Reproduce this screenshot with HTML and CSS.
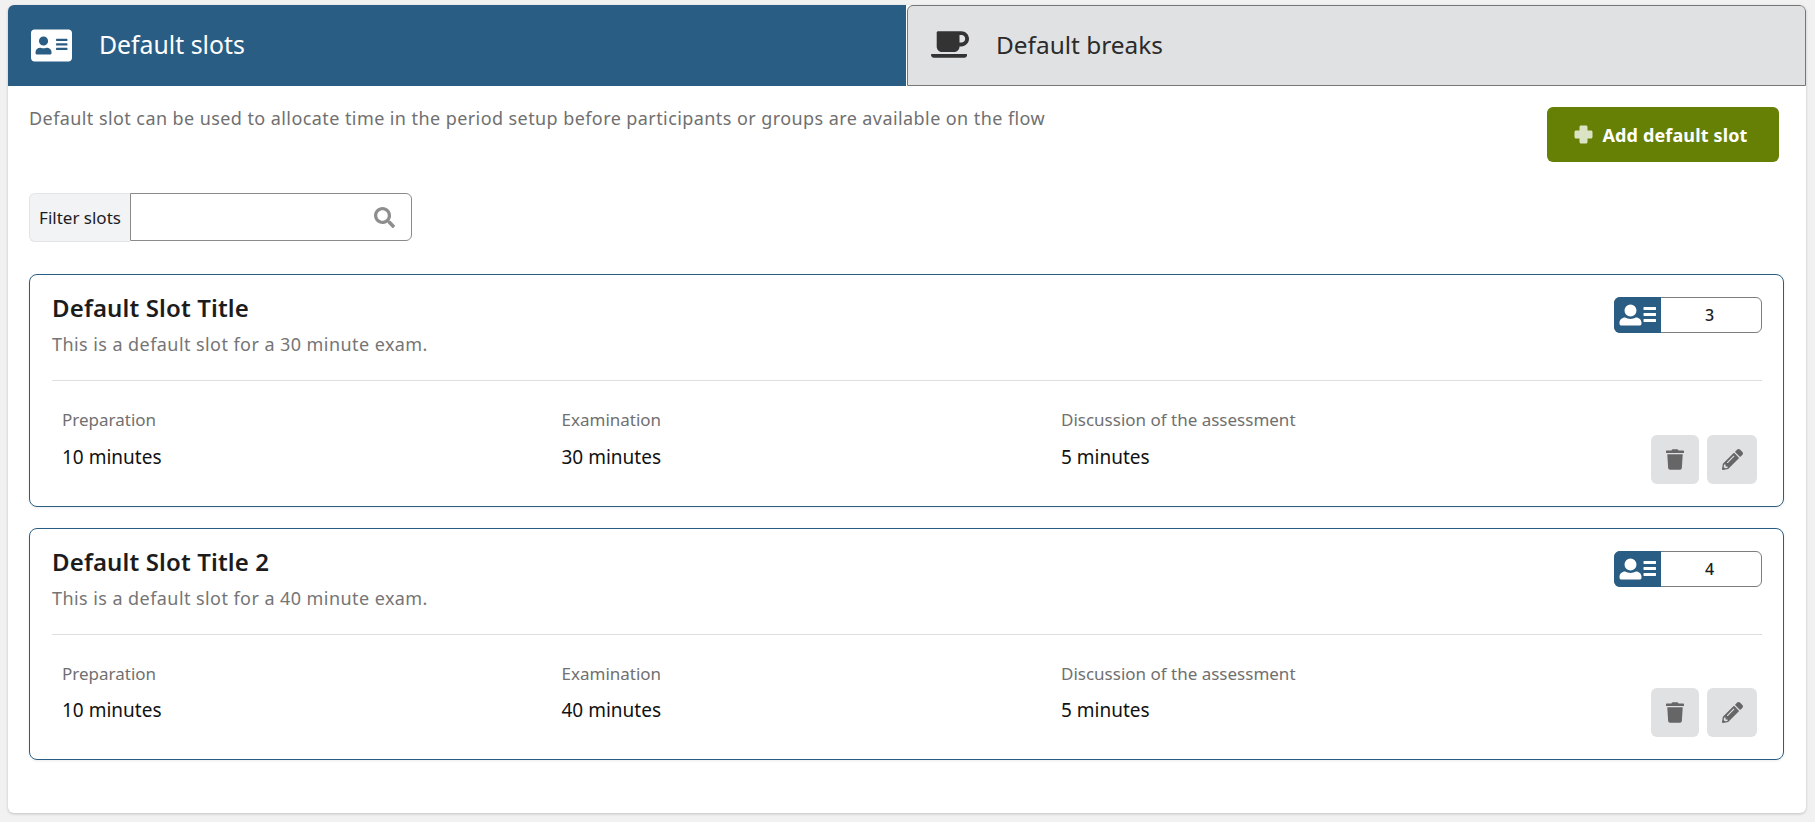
FILE: index.html
```html
<!DOCTYPE html>
<html lang="en">
<head>
<meta charset="utf-8">
<title>Default slots</title>
<link rel="stylesheet" href="styles.css">
</head>
<body>
<svg class="defs" xmlns="http://www.w3.org/2000/svg">
  <symbol id="i-card" viewBox="0 0 576 512"><path d="M528 32H48C21.5 32 0 53.5 0 80v352c0 26.5 21.5 48 48 48h480c26.5 0 48-21.5 48-48V80c0-26.5-21.5-48-48-48zm-352 96c35.3 0 64 28.7 64 64s-28.7 64-64 64-64-28.7-64-64 28.7-64 64-64zm112 236.8c0 10.6-10 19.2-22.4 19.2H86.4C74 384 64 375.4 64 364.8v-19.2c0-31.8 30.1-57.6 67.2-57.6h5c12.3 5.1 25.7 8 39.8 8s27.6-2.9 39.8-8h5c37.1 0 67.2 25.8 67.2 57.6v19.2zM512 312c0 4.4-3.6 8-8 8H360c-4.4 0-8-3.6-8-8v-16c0-4.4 3.6-8 8-8h144c4.4 0 8 3.6 8 8v16zm0-64c0 4.4-3.6 8-8 8H360c-4.4 0-8-3.6-8-8v-16c0-4.4 3.6-8 8-8h144c4.4 0 8 3.6 8 8v16zm0-64c0 4.4-3.6 8-8 8H360c-4.4 0-8-3.6-8-8v-16c0-4.4 3.6-8 8-8h144c4.4 0 8 3.6 8 8v16z"/></symbol>
  <symbol id="i-badge" viewBox="0 0 47 36"><path d="M16.5 7.500a6 6 0 1 1 0 12 6 6 0 0 1 0-12zM11 20.500c1.600.9 3.500 1.400 5.500 1.400s3.900-.5 5.500-1.400c3 0 5.500 2.300 5.500 5.200v1.100c0 1-.9 1.800-2 1.800H7.500c-1.100 0-2-.8-2-1.800v-1.100c0-2.900 2.500-5.200 5.500-5.200zM30 10h11.500c.3 0 .5.200.5.500v2c0 .3-.2.500-.5.500H30c-.3 0-.5-.2-.5-.5v-2c0-.3.200-.5.500-.5zM30 16h11.500c.3 0 .5.200.5.500v2c0 .3-.2.500-.5.500H30c-.3 0-.5-.2-.5-.5v-2c0-.3.200-.5.500-.5zM30 22h11.500c.3 0 .5.200.5.500v2c0 .3-.2.500-.5.500H30c-.3 0-.5-.2-.5-.5v-2c0-.3.200-.5.500-.5z"/></symbol>
  <symbol id="i-coffee" viewBox="0 0 640 512"><path d="M192 384h192c53 0 96-43 96-96h32c70.6 0 128-57.4 128-128S582.6 32 512 32H120c-13.3 0-24 10.7-24 24v232c0 53 43 96 96 96zM512 96c35.3 0 64 28.7 64 64s-28.7 64-64 64h-32V96h32zm47.7 384H48.3c-47.6 0-61-64-36-64h583.3c25 0 11.8 64-35.9 64z"/></symbol>
  <symbol id="i-search" viewBox="0 0 512 512"><path d="M505 442.7L405.3 343c-4.5-4.5-10.6-7-17-7H372c27.6-35.3 44-79.7 44-128C416 93.1 322.9 0 208 0S0 93.1 0 208s93.1 208 208 208c48.3 0 92.7-16.4 128-44v16.3c0 6.4 2.5 12.5 7 17l99.7 99.7c9.4 9.4 24.6 9.4 33.9 0l28.3-28.3c9.4-9.4 9.4-24.6.1-34zM208 336c-70.7 0-128-57.2-128-128 0-70.7 57.2-128 128-128 70.7 0 128 57.2 128 128 0 70.7-57.2 128-128 128z"/></symbol>
  <symbol id="i-plus" viewBox="0 0 19 19"><path d="M7 .5h5c.8 0 1.500.7 1.500 1.500v3.500H17c.8 0 1.500.7 1.500 1.500v5c0 .8-.7 1.500-1.500 1.500h-3.500V17c0 .8-.7 1.500-1.500 1.500H7c-.8 0-1.500-.7-1.500-1.500v-3.500H2c-.8 0-1.500-.7-1.500-1.500V7c0-.8.7-1.500 1.500-1.500h3.500V2C5.500 1.200 6.200.5 7 .5z"/></symbol>
  <symbol id="i-trash" viewBox="0 0 448 512"><path d="M432 32H312l-9.4-18.7A24 24 0 0 0 281.1 0H166.8a23.72 23.72 0 0 0-21.4 13.3L136 32H16A16 16 0 0 0 0 48v32a16 16 0 0 0 16 16h416a16 16 0 0 0 16-16V48a16 16 0 0 0-16-16zM53.2 467a48 48 0 0 0 47.9 45h245.8a48 48 0 0 0 47.9-45L416 128H32z"/></symbol>
  <symbol id="i-pencil" viewBox="0 0 512 512"><path d="M497.9 142.1l-46.1 46.1c-4.7 4.7-12.3 4.7-17 0l-111-111c-4.7-4.7-4.7-12.3 0-17l46.1-46.1c18.7-18.7 49.1-18.7 67.9 0l60.1 60.1c18.8 18.7 18.8 49.1 0 67.9zM284.2 99.8L21.6 362.4.4 483.9c-2.9 16.4 11.4 30.6 27.8 27.8l121.5-21.3 262.6-262.6c4.7-4.7 4.7-12.3 0-17l-111-111c-4.8-4.7-12.4-4.7-17.1 0zM124.1 339.9c-5.5-5.5-5.5-14.3 0-19.8l154-154c5.5-5.5 14.3-5.5 19.8 0s5.5 14.3 0 19.8l-154 154c-5.5 5.5-14.3 5.5-19.8 0zM88 424h48v36.3l-64.5 11.3-31.1-31.1L51.7 376H88v48z"/></symbol>
</svg>

<main class="panel">
  <nav class="tabs">
    <a class="tab tab-active">
      <svg class="tab-icon"><use href="#i-card"/></svg>
      <span class="tab-text">Default slots</span>
    </a>
    <a class="tab tab-idle">
      <svg class="tab-icon"><use href="#i-coffee"/></svg>
      <span class="tab-text">Default breaks</span>
    </a>
  </nav>

  <div class="content">
    <div class="intro">
      <p class="intro-text">Default slot can be used to allocate time in the period setup before participants or groups are available on the flow</p>
      <button class="add-btn"><svg class="add-icon"><use href="#i-plus"/></svg>Add default slot</button>
    </div>

    <div class="filter">
      <label class="filter-label">Filter slots</label>
      <div class="filter-input"><svg class="search-icon"><use href="#i-search"/></svg></div>
    </div>

    <section class="slot">
      <header class="slot-head">
        <div>
          <h2 class="slot-title">Default Slot Title</h2>
          <p class="slot-desc">This is a default slot for a 30 minute exam.</p>
        </div>
        <div class="count">
          <span class="count-icon"><svg><use href="#i-badge"/></svg></span>
          <span class="count-value">3</span>
        </div>
      </header>
      <div class="slot-body">
        <div class="cols">
          <div class="col"><div class="col-label">Preparation</div><div class="col-value">10 minutes</div></div>
          <div class="col"><div class="col-label">Examination</div><div class="col-value">30 minutes</div></div>
          <div class="col"><div class="col-label">Discussion of the assessment</div><div class="col-value">5 minutes</div></div>
        </div>
        <div class="actions">
          <button class="icon-btn btn-del"><svg class="trash"><use href="#i-trash"/></svg></button>
          <button class="icon-btn btn-edit"><svg class="pencil"><use href="#i-pencil"/></svg></button>
        </div>
      </div>
    </section>

    <section class="slot">
      <header class="slot-head">
        <div>
          <h2 class="slot-title">Default Slot Title 2</h2>
          <p class="slot-desc">This is a default slot for a 40 minute exam.</p>
        </div>
        <div class="count">
          <span class="count-icon"><svg><use href="#i-badge"/></svg></span>
          <span class="count-value">4</span>
        </div>
      </header>
      <div class="slot-body">
        <div class="cols">
          <div class="col"><div class="col-label">Preparation</div><div class="col-value">10 minutes</div></div>
          <div class="col"><div class="col-label">Examination</div><div class="col-value">40 minutes</div></div>
          <div class="col"><div class="col-label">Discussion of the assessment</div><div class="col-value">5 minutes</div></div>
        </div>
        <div class="actions">
          <button class="icon-btn btn-del"><svg class="trash"><use href="#i-trash"/></svg></button>
          <button class="icon-btn btn-edit"><svg class="pencil"><use href="#i-pencil"/></svg></button>
        </div>
      </div>
    </section>
  </div>
</main>
</body>
</html>
```
FILE: styles.css
```css
* { box-sizing: border-box; }
html, body { height: 100%; }
body {
  margin: 0;
  padding: 5px 9px 9px 8px;
  background: #f1f1f1;
  font-family: "Noto Sans", "Open Sans", sans-serif;
  color: #1c1c1c;
  overflow: hidden;
}
.defs { display: none; }
.panel {
  height: 808px;
  background: #fff;
  border-radius: 6px;
  box-shadow: 0 1px 3px rgba(0,0,0,.2);
  overflow: hidden;
}
.tabs { display: flex; height: 81px; }
.tab {
  flex: 0 0 auto;
  display: flex;
  align-items: center;
  font-size: 24.8px;
}
.tab-text { margin-bottom: 3px; }
.tab-active { width: 898px; background: #2a5d84; color: #fff; padding-left: 23px; }
.tab-idle {
  width: 899px;
  margin-left: 1px;
  background: #e0e1e3;
  color: #2b2b2b;
  padding-left: 23px;
  border: 1px solid #777;
  border-radius: 6px 6px 0 0;
  font-size: 24.4px;
}
.tab-icon { width: 41px; height: 37px; fill: currentColor; margin-right: 27px; }
.tab-idle .tab-icon { fill: #333; width: 38px; margin-right: 27px; margin-bottom: 3px; }
.content { padding: 18px 22px 0 21px; }
.intro { display: flex; justify-content: space-between; align-items: flex-start; }
.intro-text { margin: 2px 0 0; font-size: 18px; letter-spacing: .42px; color: #707070; }
.add-btn {
  width: 232px;
  height: 55px;
  margin: 3px 5px 0 0;
  border: 0;
  border-radius: 6px;
  background: #668006;
  color: #fff;
  font: 700 18px "Noto Sans", sans-serif;
  letter-spacing: .15px;
  padding: 0 4px 0 0;
  display: flex;
  align-items: center;
  justify-content: center;
}
.add-icon { width: 19px; height: 19px; fill: #dbe3c4; margin-right: 9px; }
.filter { display: flex; margin-top: 31px; width: 383px; height: 49px; }
.filter-label {
  width: 101px;
  background: #f2f3f5;
  border: 1px solid #e3e4e6;
  border-right: 0;
  border-radius: 6px 0 0 6px;
  display: flex;
  align-items: center;
  justify-content: center;
  font-size: 17px;
}
.filter-input {
  flex: 1;
  border: 1px solid #8a8a8a;
  border-radius: 0 6px 6px 0;
  display: flex;
  align-items: center;
  justify-content: flex-end;
  padding-right: 16px;
  margin-bottom: 1px;
}
.search-icon { width: 21px; height: 21px; fill: #8e8e8e; }
.slot {
  margin: 32px 0 0 0;
  height: 233px;
  width: 1755px;
  border: 1px solid #2a5d84;
  border-radius: 8px;
  padding: 18px 21px 0 22px;
  box-shadow: 0 1px 3px rgba(0,0,0,.08);
}
.slot + .slot { margin-top: 21px; height: 232px; }
.slot-head {
  display: flex;
  justify-content: space-between;
  align-items: flex-start;
  height: 88px;
  border-bottom: 1px solid #dedede;
}
.slot-title { margin: -1.5px 0 0; font-size: 24px; letter-spacing: .14px; line-height: 32px; font-weight: 600; }
.slot-desc { margin: 8.5px 0 0; font-size: 18px; letter-spacing: .43px; line-height: 24px; color: #757575; }
.count {
  display: flex;
  width: 148px;
  height: 36px;
  margin-top: 4px;
  border: 1px solid #7d7d7d;
  border-radius: 6px;
}
.count-icon {
  flex: none;
  width: 47px;
  height: 36px;
  margin: -1px 0 -1px -1px;
  background: #2a5d84;
  border-radius: 6px 0 0 6px;
}
.count-icon svg { display: block; width: 47px; height: 36px; fill: #fff; }
.count-value { flex: 1; padding-right: 3px; text-align: center; font-size: 16px; line-height: 34px; font-weight: 500; }
.slot-body {
  display: flex;
  justify-content: space-between;
  padding: 27px 5px 0 10px;
}
.cols { display: grid; grid-template-columns: repeat(3, 499.5px); }
.col-label { font-size: 17px; line-height: 24px; color: #707070; }
.col-value { margin-top: 12px; font-size: 19px; line-height: 26px; color: #111; }
.slot + .slot .col-value { margin-top: 11px; }
.actions { display: flex; gap: 8px; margin-top: 27px; }
.slot + .slot .actions { margin-top: 26px; }
.icon-btn {
  height: 49px;
  border: 0;
  border-radius: 6px;
  background: #e0e1e3;
  display: flex;
  align-items: center;
  justify-content: center;
  padding: 0;
}
.btn-del { width: 48px; }
.btn-edit { width: 50px; }
.trash { width: 18px; height: 21px; fill: #666; }
.pencil { width: 21px; height: 21px; fill: #666; }
```
